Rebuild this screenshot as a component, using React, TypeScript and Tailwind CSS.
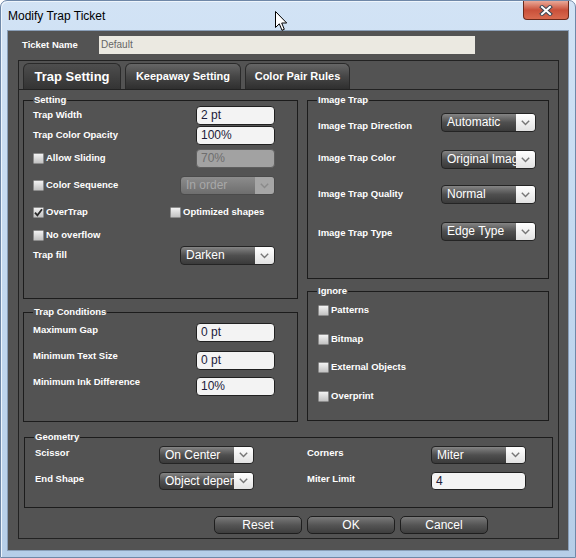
import React from 'react';

// ==================== 小元件 ====================
const Chevron: React.FC<{ color?: string }> = ({ color = '#767676' }) => (
  <svg width="9" height="6" viewBox="0 0 9 6">
    <polyline points="0.8,0.8 4.5,4.6 8.2,0.8" fill="none" stroke={color} strokeWidth="1.4" />
  </svg>
);

const Select: React.FC<{ value: string; disabled?: boolean; h?: string }> = ({ value, disabled, h = 'h-[19px]' }) => (
  <div
    className={`flex ${h} w-[95px] shrink-0 overflow-hidden rounded-[4px] border ${
      disabled
        ? 'border-[#4a4a4a] bg-gradient-to-b from-[#8c8c8c] to-[#6e6e6e]'
        : 'border-[#242424] bg-gradient-to-b from-[#858585] via-[#4f4f4f] to-[#3a3a3a]'
    }`}
  >
    <span
      className={`flex-1 overflow-hidden whitespace-nowrap pl-[5px] text-[12px] leading-[17px] ${
        disabled ? 'text-[#a8a8a8]' : 'text-white'
      }`}
    >
      {value}
    </span>
    <span
      className={`flex w-[19px] shrink-0 items-center justify-center ${
        disabled ? 'bg-[#a6a6a6]' : 'bg-gradient-to-b from-white to-[#e2e2e2]'
      }`}
    >
      <Chevron color={disabled ? '#8a8a8a' : '#767676'} />
    </span>
  </div>
);

const TextInput: React.FC<{ value: string; disabled?: boolean; w?: string; h?: string }> = ({
  value,
  disabled,
  w = 'w-[79px]',
  h = 'h-[19px]',
}) => (
  <div
    className={`${w} ${h} shrink-0 rounded-[4px] border pl-[4px] text-[12px] leading-[17px] ${
      disabled ? 'border-[#5e5e5e] bg-[#a2a2a2] text-[#6e6e6e]' : 'border-[#202020] bg-[#f3f3f3] text-[#1b1b3a]'
    }`}
  >
    {value}
  </div>
);

const Checkbox: React.FC<{ label: string; checked?: boolean }> = ({ label, checked }) => (
  <div className="flex items-center gap-[2px]">
    <span className="flex h-[11px] w-[11px] items-center justify-center rounded-[1px] border border-[#8c8c8c] bg-gradient-to-b from-[#f2f2f2] to-[#c2c2c2]">
      {checked && (
        <svg width="9" height="9" viewBox="0 0 9 9">
          <path d="M1 4.6 L3.4 7.4 L8 1.2" fill="none" stroke="#2a2a2a" strokeWidth="1.8" />
        </svg>
      )}
    </span>
    <span className="text-[9.5px] font-bold text-white">{label}</span>
  </div>
);

const Label: React.FC<{ children: React.ReactNode; className?: string }> = ({ children, className = '' }) => (
  <span className={`text-[9.5px] font-bold text-white ${className}`}>{children}</span>
);

const GroupBox: React.FC<{ title: string; className: string; children: React.ReactNode }> = ({
  title,
  className,
  children,
}) => (
  <div className={`relative border border-[#1c1c1c] ${className}`}>
    <span className="absolute left-[9px] top-[-7px] bg-[#535353] px-[1px] text-[9.5px] font-bold leading-[12px] text-white">
      {title}
    </span>
    {children}
  </div>
);

const Row: React.FC<{ className?: string; children: React.ReactNode }> = ({ className = '', children }) => (
  <div className={`flex h-[19px] items-center justify-between ${className}`}>{children}</div>
);

const Button: React.FC<{ label: string }> = ({ label }) => (
  <button className="h-[18px] w-[88px] rounded-[5px] border border-[#1e1e1e] bg-gradient-to-b from-[#7a7a7a] via-[#555555] to-[#3e3e3e] text-[12px] leading-[16px] text-white">
    {label}
  </button>
);

// ==================== 主視窗 ====================
const App: React.FC = () => {
  const tabs = [
    { name: 'Trap Setting', w: 'w-[98px]', active: true },
    { name: 'Keepaway Setting', w: 'w-[116px]', active: false },
    { name: 'Color Pair Rules', w: 'w-[105px]', active: false },
  ];

  return (
    <div className="relative h-[558px] w-[576px] overflow-hidden rounded-t-[7px] border border-[#6f88a8] bg-gradient-to-b from-[#d2e3f5] via-[#c2d8ef] to-[#b6cee8] font-['Liberation_Sans',Arial,sans-serif] shadow-[inset_1px_1px_0_#eef5fc]">
      {/* 標題列 */}
      <div className="flex h-[29px] items-start justify-between">
        <span className="self-center pl-[7px] text-[12px] text-black">Modify Trap Ticket</span>
        <div className="mr-[6px] flex h-[19px] w-[46px] items-center justify-center rounded-b-[4px] border border-t-0 border-[#6b2a1c] bg-gradient-to-b from-[#e9a898] via-[#c9503a] to-[#d96a4f]">
          <svg width="14" height="11" viewBox="0 0 14 11">
            <path d="M3 2 L11 9 M11 2 L3 9" stroke="#3b4654" strokeWidth="4" strokeLinecap="square" />
            <path d="M3 2 L11 9 M11 2 L3 9" stroke="#ffffff" strokeWidth="2" strokeLinecap="square" />
          </svg>
        </div>
      </div>

      {/* 內容 */}
      <div className="mx-[6px] h-[521px] border border-[#8a9fb8] bg-[#535353]">
        <div className="flex items-center pl-[14px] pt-[5px]">
          <Label className="w-[77px]">Ticket Name</Label>
          <div className="h-[18px] w-[376px] bg-[#ebe9e1] pl-[2px] text-[10px] leading-[18px] text-[#666666]">
            Default
          </div>
        </div>

        <div className="ml-[10px] mt-[6px] h-[479px] w-[541px] border border-[#222222]">
          <div className="flex items-end gap-[4px] pl-[4px] pt-[2px]">
            {tabs.map((t) => (
              <div
                key={t.name}
                className={`flex h-[26px] ${t.w} items-center justify-center rounded-t-[6px] border border-b-0 border-[#2a2a2a] text-white ${
                  t.active
                    ? 'bg-gradient-to-b from-[#4e4e4e] to-[#343434] text-[13px] font-bold'
                    : 'bg-gradient-to-b from-[#666666] via-[#464646] to-[#2f2f2f] text-[11px] font-bold'
                }`}
              >
                {t.name}
              </div>
            ))}
          </div>

          <div className="border-t border-[#222222] pl-[4px] pt-[10px]">
            <div className="flex gap-[9px]">
              {/* 左欄 */}
              <div className="flex flex-col">
                <GroupBox title="Setting" className="h-[199px] w-[275px] pl-[9px] pr-[22px] pt-[5px]">
                  <Row>
                    <Label>Trap Width</Label>
                    <TextInput value="2 pt" />
                  </Row>
                  <Row className="mt-[1px]">
                    <Label>Trap Color Opacity</Label>
                    <TextInput value="100%" />
                  </Row>
                  <Row className="mt-[4px]">
                    <Checkbox label="Allow Sliding" />
                    <TextInput value="70%" disabled />
                  </Row>
                  <Row className="mt-[8px]">
                    <Checkbox label="Color Sequence" />
                    <Select value="In order" disabled />
                  </Row>
                  <Row className="mt-[8px] !justify-start">
                    <div className="w-[137px]">
                      <Checkbox label="OverTrap" checked />
                    </div>
                    <Checkbox label="Optimized shapes" />
                  </Row>
                  <Row className="mt-[4px] !justify-start">
                    <Checkbox label="No overflow" />
                  </Row>
                  <Row className="mt-[1px]">
                    <Label>Trap fill</Label>
                    <Select value="Darken" />
                  </Row>
                </GroupBox>

                <GroupBox title="Trap Conditions" className="mt-[13px] h-[110px] w-[275px] pl-[9px] pr-[22px] pt-[10px]">
                  <Row>
                    <Label className="pb-[4px]">Maximum Gap</Label>
                    <TextInput value="0 pt" />
                  </Row>
                  <Row className="mt-[9px]">
                    <Label className="pb-[8px]">Minimum Text Size</Label>
                    <TextInput value="0 pt" />
                  </Row>
                  <Row className="mt-[7px]">
                    <Label className="pb-[9px]">Minimum Ink Difference</Label>
                    <TextInput value="10%" />
                  </Row>
                </GroupBox>
              </div>

              {/* 右欄 */}
              <div className="flex flex-col">
                <GroupBox title="Image Trap" className="h-[179px] w-[242px] pl-[10px] pr-[12px] pt-[12px]">
                  <Row>
                    <Label className="pt-[8px]">Image Trap Direction</Label>
                    <Select value="Automatic" />
                  </Row>
                  <Row className="mt-[18px]">
                    <Label className="pb-[3px]">Image Trap Color</Label>
                    <Select value="Original Image" />
                  </Row>
                  <Row className="mt-[16px]">
                    <Label>Image Trap Quality</Label>
                    <Select value="Normal" />
                  </Row>
                  <Row className="mt-[18px]">
                    <Label className="pt-[3px]">Image Trap Type</Label>
                    <Select value="Edge Type" />
                  </Row>
                </GroupBox>

                <GroupBox title="Ignore" className="mt-[12px] h-[130px] w-[242px] pl-[10px] pt-[9px]">
                  <Row className="!justify-start">
                    <Checkbox label="Patterns" />
                  </Row>
                  <Row className="mt-[10px] !justify-start">
                    <Checkbox label="Bitmap" />
                  </Row>
                  <Row className="mt-[9px] !justify-start">
                    <Checkbox label="External Objects" />
                  </Row>
                  <Row className="mt-[10px] !justify-start">
                    <Checkbox label="Overprint" />
                  </Row>
                </GroupBox>
              </div>
            </div>

            {/* Geometry */}
            <GroupBox title="Geometry" className="ml-[1px] mt-[15px] h-[71px] w-[529px] pl-[10px] pt-[8px]">
              <div className="flex h-[18px] items-center">
                <Label className="w-[124px] pb-[4px]">Scissor</Label>
                <Select value="On Center" h="h-[18px]" />
                <Label className="ml-[53px] w-[124px] pb-[4px]">Corners</Label>
                <Select value="Miter" h="h-[18px]" />
              </div>
              <div className="mt-[8px] flex h-[18px] items-center">
                <Label className="w-[124px] pb-[4px]">End Shape</Label>
                <Select value="Object dependent" h="h-[18px]" />
                <Label className="ml-[53px] w-[124px] pb-[4px]">Miter Limit</Label>
                <TextInput value="4" w="w-[95px]" h="h-[18px]" />
              </div>
            </GroupBox>

            <div className="mt-[8px] flex gap-[5px] pl-[191px]">
              <Button label="Reset" />
              <Button label="OK" />
              <Button label="Cancel" />
            </div>
          </div>
        </div>
      </div>

      {/* 滑鼠游標 */}
      <svg className="absolute left-[274px] top-[10px]" width="13" height="21" viewBox="0 0 13 21">
        <path d="M0.5 0.5 L0.5 16.5 L4.3 12.8 L7 19.3 L9.3 18.3 L6.7 12 L11.7 12 Z" fill="#ffffff" stroke="#000000" strokeWidth="1" />
      </svg>
    </div>
  );
};

export default App;
